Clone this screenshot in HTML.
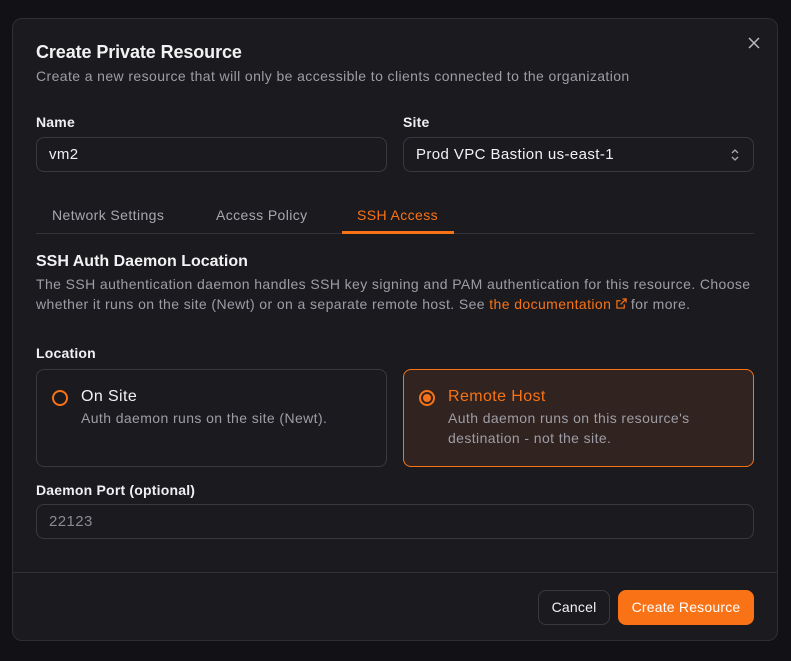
<!DOCTYPE html>
<html><head><style>
*{box-sizing:border-box;margin:0;padding:0}
body{width:791px;height:661px;background:#121116;font-family:"Liberation Sans",sans-serif;position:relative;overflow:hidden;color:#f2f2f3;letter-spacing:0.4px}
.dlg{position:absolute;left:12px;top:18px;width:766px;height:623px;background:#1b1a1f;border:1px solid #2f2e34;border-radius:10px}
.a{position:absolute;white-space:nowrap}
.lab{font-size:14px;font-weight:bold;color:#f0f0f2;letter-spacing:0.2px}
.inp{position:absolute;border:1px solid #3a3940;border-radius:8px;height:35px;font-size:15px;padding-left:12px;line-height:33px}
.muted{color:#9e9da6}
.card{position:absolute;border:1px solid #3a3940;border-radius:8px;width:351px;height:98px;top:350px}
.radio{position:absolute;left:15px;top:20px;width:16px;height:16px;border-radius:50%;border:2px solid #f97316}
</style></head><body>
<div class="dlg">
 <div class="a" style="left:23px;top:23px;font-size:18px;font-weight:bold;letter-spacing:-0.1px">Create Private Resource</div>
 <div class="a muted" style="left:23px;top:49px;font-size:14px">Create a new resource that will only be accessible to clients connected to the organization</div>
 <svg class="a" style="left:735px;top:18px" width="12" height="12" viewBox="0 0 12 12"><path d="M1 1L11 11M11 1L1 11" stroke="#bbb" stroke-width="1.5"/></svg>
 <div class="a lab" style="left:23px;top:95px">Name</div>
 <div class="a lab" style="left:390px;top:95px">Site</div>
 <div class="inp" style="left:23px;top:118px;width:351px">vm2</div>
 <div class="inp" style="left:390px;top:118px;width:351px">Prod VPC Bastion us-east-1
  <svg style="position:absolute;right:13px;top:10px" width="10" height="14" viewBox="0 0 10 14"><path d="M2 5L5 2L8 5M2 9L5 12L8 9" stroke="#aaa" stroke-width="1.3" fill="none"/></svg></div>
 <div class="a muted" style="left:39px;top:188px;font-size:14px;color:#a8a7ae">Network Settings</div>
 <div class="a muted" style="left:203px;top:188px;font-size:14px;color:#a8a7ae">Access Policy</div>
 <div class="a" style="left:344px;top:188px;font-size:14px;color:#f97316">SSH Access</div>
 <div class="a" style="left:23px;top:214px;width:718px;height:1px;background:#34333a"></div>
 <div class="a" style="left:329px;top:212px;width:112px;height:3px;background:#f97316"></div>
 <div class="a" style="left:23px;top:234px;font-size:16px;font-weight:bold;letter-spacing:0">SSH Auth Daemon Location</div>
 <div class="a muted" style="left:23px;top:255px;font-size:14px;line-height:20px">The SSH authentication daemon handles SSH key signing and PAM authentication for this resource. Choose<br>whether it runs on the site (Newt) or on a separate remote host. See <span style="color:#f97316">the documentation <svg width="11" height="11" viewBox="0 0 12 12"><path d="M7 1H11V5M11 1L5 7M9 7V11H1V3H5" stroke="#f97316" stroke-width="1.3" fill="none"/></svg></span> for more.</div>
 <div class="a lab" style="left:23px;top:326px">Location</div>
 <div class="card" style="left:23px"><div class="radio"></div>
  <div class="a" style="left:44px;top:18px;font-size:16px">On Site</div>
  <div class="a muted" style="left:44px;top:40px;font-size:14px">Auth daemon runs on the site (Newt).</div></div>
 <div class="card" style="left:390px;border-color:#f97316;background:#302320"><div class="radio"><div style="position:absolute;left:2px;top:2px;width:8px;height:8px;border-radius:50%;background:#f97316"></div></div>
  <div class="a" style="left:44px;top:18px;font-size:16px;color:#f97316">Remote Host</div>
  <div class="a muted" style="left:44px;top:38px;font-size:14px;line-height:20px">Auth daemon runs on this resource's<br>destination - not the site.</div></div>
 <div class="a lab" style="left:23px;top:463px">Daemon Port (optional)</div>
 <div class="inp muted" style="left:23px;top:485px;width:718px;color:#8a8990">22123</div>
 <div class="a" style="left:0;top:553px;width:764px;height:1px;background:#34333a"></div>
 <div class="a" style="left:525px;top:571px;width:72px;height:35px;border:1px solid #3a3940;border-radius:8px;font-size:14px;text-align:center;line-height:33px;letter-spacing:0.2px">Cancel</div>
 <div class="a" style="left:605px;top:571px;width:136px;height:35px;background:#f97316;border-radius:8px;font-size:14px;text-align:center;line-height:35px;color:#fff;letter-spacing:0.2px">Create Resource</div>
</div>
</body></html>
